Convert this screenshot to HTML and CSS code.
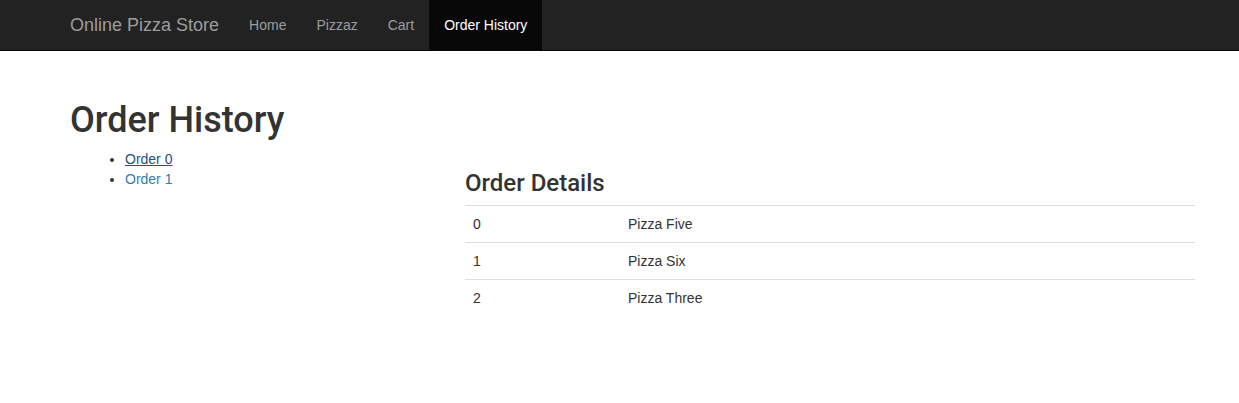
FILE: index.html
```html
<!DOCTYPE html>
<html lang="en">
<head>
<meta charset="utf-8">
<title>Online Pizza Store</title>
<link rel="stylesheet" href="styles.css">
</head>
<body>
<nav class="navbar">
  <div class="navbar-inner">
    <a class="brand" href="#">Online Pizza Store</a>
    <ul class="nav">
      <li><a href="#">Home</a></li>
      <li><a href="#">Pizzaz</a></li>
      <li><a href="#">Cart</a></li>
      <li class="active"><a href="#">Order History</a></li>
    </ul>
  </div>
</nav>
<main class="container">
  <h1 class="page-title">Order History</h1>
  <div class="row">
    <div class="col-side">
      <ul class="orders">
        <li><a class="focused" href="#">Order 0</a></li>
        <li><a href="#">Order 1</a></li>
      </ul>
    </div>
    <div class="col-main">
      <h3 class="section-title">Order Details</h3>
      <table class="table">
        <tbody>
          <tr><td class="idx">0</td><td>Pizza Five</td></tr>
          <tr><td class="idx">1</td><td>Pizza Six</td></tr>
          <tr><td class="idx">2</td><td>Pizza Three</td></tr>
        </tbody>
      </table>
    </div>
  </div>
</main>
</body>
</html>
```
FILE: styles.css
```css
* { box-sizing: border-box; }
html, body { margin: 0; padding: 0; }
body {
  font-family: "Liberation Sans", Arial, sans-serif;
  font-size: 14px;
  line-height: 20px;
  color: #333;
  background: #fff;
}
a { color: #337ab7; text-decoration: none; }
a.focused { color: #23527c; text-decoration: underline; }

.navbar {
  background: #222;
  border-bottom: 1px solid #080808;
  height: 51px;
}
.navbar-inner {
  width: 1170px;
  margin-left: 55px;
  padding: 0 15px;
  display: flex;
  align-items: stretch;
  height: 50px;
}
.brand {
  display: block;
  margin-left: -15px;
  padding: 15px;
  font-size: 18px;
  line-height: 20px;
  height: 50px;
  color: #9d9d9d;
}
.nav {
  display: flex;
  list-style: none;
  margin: 0;
  padding: 0;
}
.nav a {
  display: block;
  padding: 15px;
  line-height: 20px;
  color: #9d9d9d;
}
.nav .active a {
  color: #fff;
  background: #080808;
}

.container {
  width: 1170px;
  margin-left: 55px;
  padding: 28px 15px 0;
}
.page-title {
  font-family: Roboto, "Liberation Sans", sans-serif;
  font-size: 36px;
  font-weight: 500;
  line-height: 1.1;
  margin: 22px 0 8px;
}
.row {
  display: grid;
  grid-template-columns: 380px 760px;
}
.col-side, .col-main { padding: 0 15px; }
.orders {
  margin: 0 0 10px;
  padding-left: 40px;
}
.section-title {
  font-family: Roboto, "Liberation Sans", sans-serif;
  font-size: 24px;
  font-weight: 500;
  line-height: 1.1;
  margin: 21px 0 9px;
}
.table {
  width: 100%;
  border-collapse: collapse;
  margin-bottom: 20px;
}
.table td {
  padding: 8px;
  line-height: 20px;
  border-top: 1px solid #ddd;
  vertical-align: top;
}
.table td.idx { width: 155px; }
```
